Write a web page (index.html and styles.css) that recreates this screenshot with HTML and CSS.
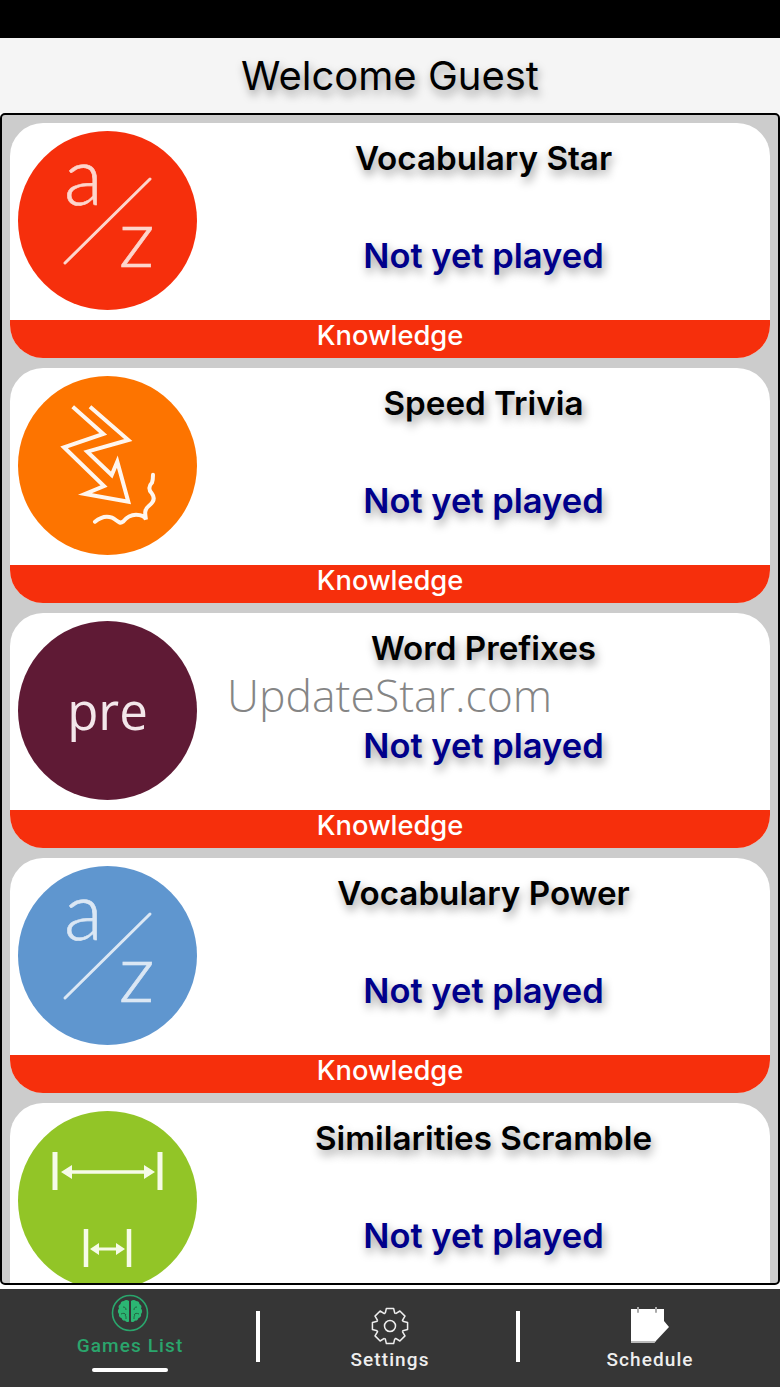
FILE: index.html
```html
<!DOCTYPE html>
<html lang="en">
<head>
    <meta charset="UTF-8">
    <meta name="viewport" content="width=device-width, initial-scale=1.0">
    <title>Games List</title>
    <link rel="stylesheet" href="styles.css">
</head>
<body>
    <div class="status-bar"></div>
    <header class="top-bar">
        <h1>Welcome Guest</h1>
    </header>

    <main class="game-list">
        <section class="card">
            <div class="card-body">
                <svg class="game-icon" viewBox="0 0 179 179">
                    <circle cx="89.5" cy="89.5" r="89.5" fill="#f62f0c"/>
                    <text class="az az-red" x="46" y="74">a</text>
                    <line x1="47" y1="132" x2="132" y2="48" stroke="#fdd5cc" stroke-width="3" stroke-linecap="round"/>
                    <text class="az az-red" x="101" y="136">z</text>
                </svg>
                <div class="card-text">
                    <h2>Vocabulary Star</h2>
                    <p>Not yet played</p>
                </div>
            </div>
            <div class="card-tag">Knowledge</div>
        </section>

        <section class="card">
            <div class="card-body">
                <svg class="game-icon" viewBox="0 0 179 179">
                    <circle cx="89.5" cy="89.5" r="89.5" fill="#fd7400"/>
                    <path d="M54.7 30.7 85.3 58 46 71.3 86 110 67 118 110.3 125.7 99.3 85.700 93.7 99 69.3 75.7 110.3 64 72 30.7" fill="none" stroke="#fff6ee" stroke-width="4"/>
                    <path d="M77 145.7c6-5 12-6 17-4 5 2 7 7 11 4 4-5 8-7 13-7 5 0 9 2 10 5-1-6-2-10 3-14 5-4 6-8 3-12-4-4-3-8 0-11 1-3 1-6 1-8" fill="none" stroke="#fff6ee" stroke-width="4" stroke-linecap="round"/>
                </svg>
                <div class="card-text">
                    <h2>Speed Trivia</h2>
                    <p>Not yet played</p>
                </div>
            </div>
            <div class="card-tag">Knowledge</div>
        </section>

        <section class="card">
            <div class="card-body">
                <svg class="game-icon" viewBox="0 0 179 179">
                    <circle cx="89.5" cy="89.5" r="89.5" fill="#5f1a35"/>
                    <text class="pre" x="89.5" y="109">pre</text>
                </svg>
                <div class="card-text">
                    <h2>Word Prefixes</h2>
                    <p>Not yet played</p>
                </div>
            </div>
            <div class="card-tag">Knowledge</div>
            <div class="watermark">UpdateStar.com</div>
        </section>

        <section class="card">
            <div class="card-body">
                <svg class="game-icon" viewBox="0 0 179 179">
                    <circle cx="89.5" cy="89.5" r="89.5" fill="#5f96cf"/>
                    <text class="az az-blue" x="46" y="74">a</text>
                    <line x1="47" y1="132" x2="132" y2="48" stroke="#dbe7f4" stroke-width="3" stroke-linecap="round"/>
                    <text class="az az-blue" x="101" y="136">z</text>
                </svg>
                <div class="card-text">
                    <h2>Vocabulary Power</h2>
                    <p>Not yet played</p>
                </div>
            </div>
            <div class="card-tag">Knowledge</div>
        </section>

        <section class="card">
            <div class="card-body">
                <svg class="game-icon" viewBox="0 0 179 179">
                    <circle cx="89.5" cy="89.5" r="89.5" fill="#92c527"/>
                    <g stroke="#f6fbe8" fill="#f6fbe8">
                        <path d="M37 41V79M142 41V79" fill="none" stroke-width="5"/>
                        <path d="M50 61H130" fill="none" stroke-width="3.500"/>
                        <path d="M43 61 54 54V68ZM137 61 126 54V68Z" stroke="none"/>
                        <path d="M68 118V156M111 118V156" fill="none" stroke-width="4.500"/>
                        <path d="M76 138H103" fill="none" stroke-width="3"/>
                        <path d="M72 138 81 132V144ZM107 138 98 132V144Z" stroke="none"/>
                    </g>
                </svg>
                <div class="card-text">
                    <h2>Similarities Scramble</h2>
                    <p>Not yet played</p>
                </div>
            </div>
        </section>
    </main>

    <nav class="tab-bar">
        <a class="tab active">
            <svg class="tab-icon" viewBox="0 0 38 38">
                <circle cx="19" cy="19" r="17.500" fill="none" stroke="#2aa56c" stroke-width="1.600"/>
                <path d="M18 7c-1.500-1.500-4-1.500-5 0-2 0-3.500 1-3.500 3-2 1-2.500 3-1.500 4.500-1.500 1.500-1.500 4 0 5.500-.5 2 .5 3.500 2.500 4 .5 2 2 3 3.500 2.500 1 1.500 2.500 2 4 1Z" fill="#2bb673"/>
                <path d="M20 7c1.500-1.500 4-1.500 5 0 2 0 3.500 1 3.500 3 2 1 2.500 3 1.500 4.500 1.500 1.500 1.500 4 0 5.500 .5 2-.5 3.500-2.500 4-.5 2-2 3-3.500 2.500-1 1.500-2.500 2-4 1Z" fill="#2bb673"/>
                <path d="M12 13c2 0 3 1 3 3M10 20c2-1 4-1 5 1M15 25c0-2 0-3-1-4M26 13c-2 0-3 1-3 3M28 20c-2-1-4-1-5 1M23 25c0-2 0-3 1-4" fill="none" stroke="#23633f" stroke-width="1"/>
            </svg>
            <span>Games List</span>
            <i class="tab-mark"></i>
        </a>
        <i class="tab-line"></i>
        <a class="tab">
            <svg class="tab-icon" viewBox="-20 -20 40 40">
                <defs>
                    <path id="tooth" d="M-5-13.500-3.800-18.500H3.800L5-13.500 6.100-13" fill="none" stroke="#eee" stroke-width="1.600" stroke-linejoin="round"/>
                </defs>
                <use href="#tooth"/>
                <use href="#tooth" transform="rotate(45)"/>
                <use href="#tooth" transform="rotate(90)"/>
                <use href="#tooth" transform="rotate(135)"/>
                <use href="#tooth" transform="rotate(180)"/>
                <use href="#tooth" transform="rotate(225)"/>
                <use href="#tooth" transform="rotate(270)"/>
                <use href="#tooth" transform="rotate(315)"/>
                <circle r="5.800" fill="none" stroke="#eee" stroke-width="1.600"/>
            </svg>
            <span>Settings</span>
        </a>
        <i class="tab-line"></i>
        <a class="tab">
            <svg class="tab-icon" viewBox="0 0 40 38">
                <path d="M1 2H34V14L39 20 24 36H1Z" fill="#fff"/>
                <path d="M1 34H26L24 36H1Z" fill="#bbb"/>
                <path d="M8 0V5M26 0V5" stroke="#aaa" stroke-width="2" stroke-linecap="round"/>
            </svg>
            <span>Schedule</span>
        </a>
    </nav>
</body>
</html>
```

FILE: styles.css
```css
* {
    box-sizing: border-box;
}

body {
    margin: 0;
    display: flex;
    flex-direction: column;
    height: 1387px;
    overflow: hidden;
    background-color: #fff;
    font-family: Inter, "Liberation Sans", Arial, sans-serif;
}

.status-bar {
    height: 38px;
    background-color: #000;
}

.top-bar {
    height: 75px;
    display: flex;
    align-items: center;
    justify-content: center;
    background-color: #f5f5f5;
}

.top-bar h1 {
    margin: 0;
    font-size: 40px;
    font-weight: normal;
    color: #000;
    text-shadow: 2px 5px 10px rgba(0, 0, 0, 0.4);
}

.game-list {
    height: 1172px;
    padding: 8px;
    display: flex;
    flex-direction: column;
    gap: 10px;
    overflow: hidden;
    background-color: #ccc;
    border: 2px solid #000;
    border-radius: 5px;
}

.card {
    position: relative;
    flex: 0 0 235px;
    display: flex;
    flex-direction: column;
    overflow: hidden;
    background-color: #fff;
    border-radius: 33px;
}

.card-body {
    flex: 0 0 197px;
    display: flex;
    padding: 8px 0 0 8px;
}

.game-icon {
    flex: 0 0 179px;
    width: 179px;
    height: 179px;
    overflow: visible;
}

.card-text {
    flex: 1;
    text-align: center;
}

.card-text h2 {
    margin: 8px 0 0;
    font-size: 33.2px;
    line-height: 38px;
    font-weight: 600;
    color: #000;
    text-shadow: 2px 5px 10px rgba(0, 0, 0, 0.4);
}

.card-text p {
    margin: 60px 0 0;
    font-size: 34.5px;
    line-height: 38px;
    font-weight: 600;
    color: #00008b;
    text-shadow: 2px 5px 10px rgba(0, 0, 0, 0.4);
}

.card-tag {
    flex: 0 0 38px;
    line-height: 31px;
    text-align: center;
    font-size: 27.3px;
    font-weight: 500;
    color: #fff;
    background-color: #f62f0c;
}

.watermark {
    position: absolute;
    left: 217px;
    top: 52px;
    font-family: "Open Sans", sans-serif;
    font-weight: 300;
    font-size: 44.5px;
    line-height: 60px;
    color: #858585;
}

.az {
    font-family: Lato, sans-serif;
    font-weight: 300;
    font-size: 80px;
    stroke-width: 0.6;
}

.az-red {
    fill: #fdd5cc;
    stroke: #fdd5cc;
}

.az-blue {
    fill: #dbe7f4;
    stroke: #dbe7f4;
}

.pre {
    font-family: "Open Sans", sans-serif;
    font-size: 51px;
    font-weight: 500;
    text-anchor: middle;
    fill: #f3e6ea;
}

.tab-bar {
    height: 98px;
    margin-top: 4px;
    display: flex;
    align-items: flex-start;
    background-color: #363636;
}

.tab {
    position: relative;
    flex: 1;
    height: 98px;
    padding-top: 18px;
    display: flex;
    flex-direction: column;
    align-items: center;
    color: #eee;
}

.tab span {
    font-family: Roboto, sans-serif;
    font-size: 19px;
    font-weight: 500;
    letter-spacing: 1.1px;
    line-height: 22px;
}

.tab-icon {
    width: 40px;
    height: 38px;
    margin-bottom: 4px;
}

.tab.active {
    padding-top: 5px;
    color: #2aa56c;
}

.tab.active .tab-icon {
    margin-bottom: 3px;
}

.tab-mark {
    position: absolute;
    left: 92px;
    bottom: 15px;
    width: 76px;
    height: 4px;
    border-radius: 2px;
    background-color: #fff;
}

.tab-line {
    flex: 0 0 4px;
    height: 51px;
    margin: 22px 0 0 -4px;
    background-color: #fff;
}
```
